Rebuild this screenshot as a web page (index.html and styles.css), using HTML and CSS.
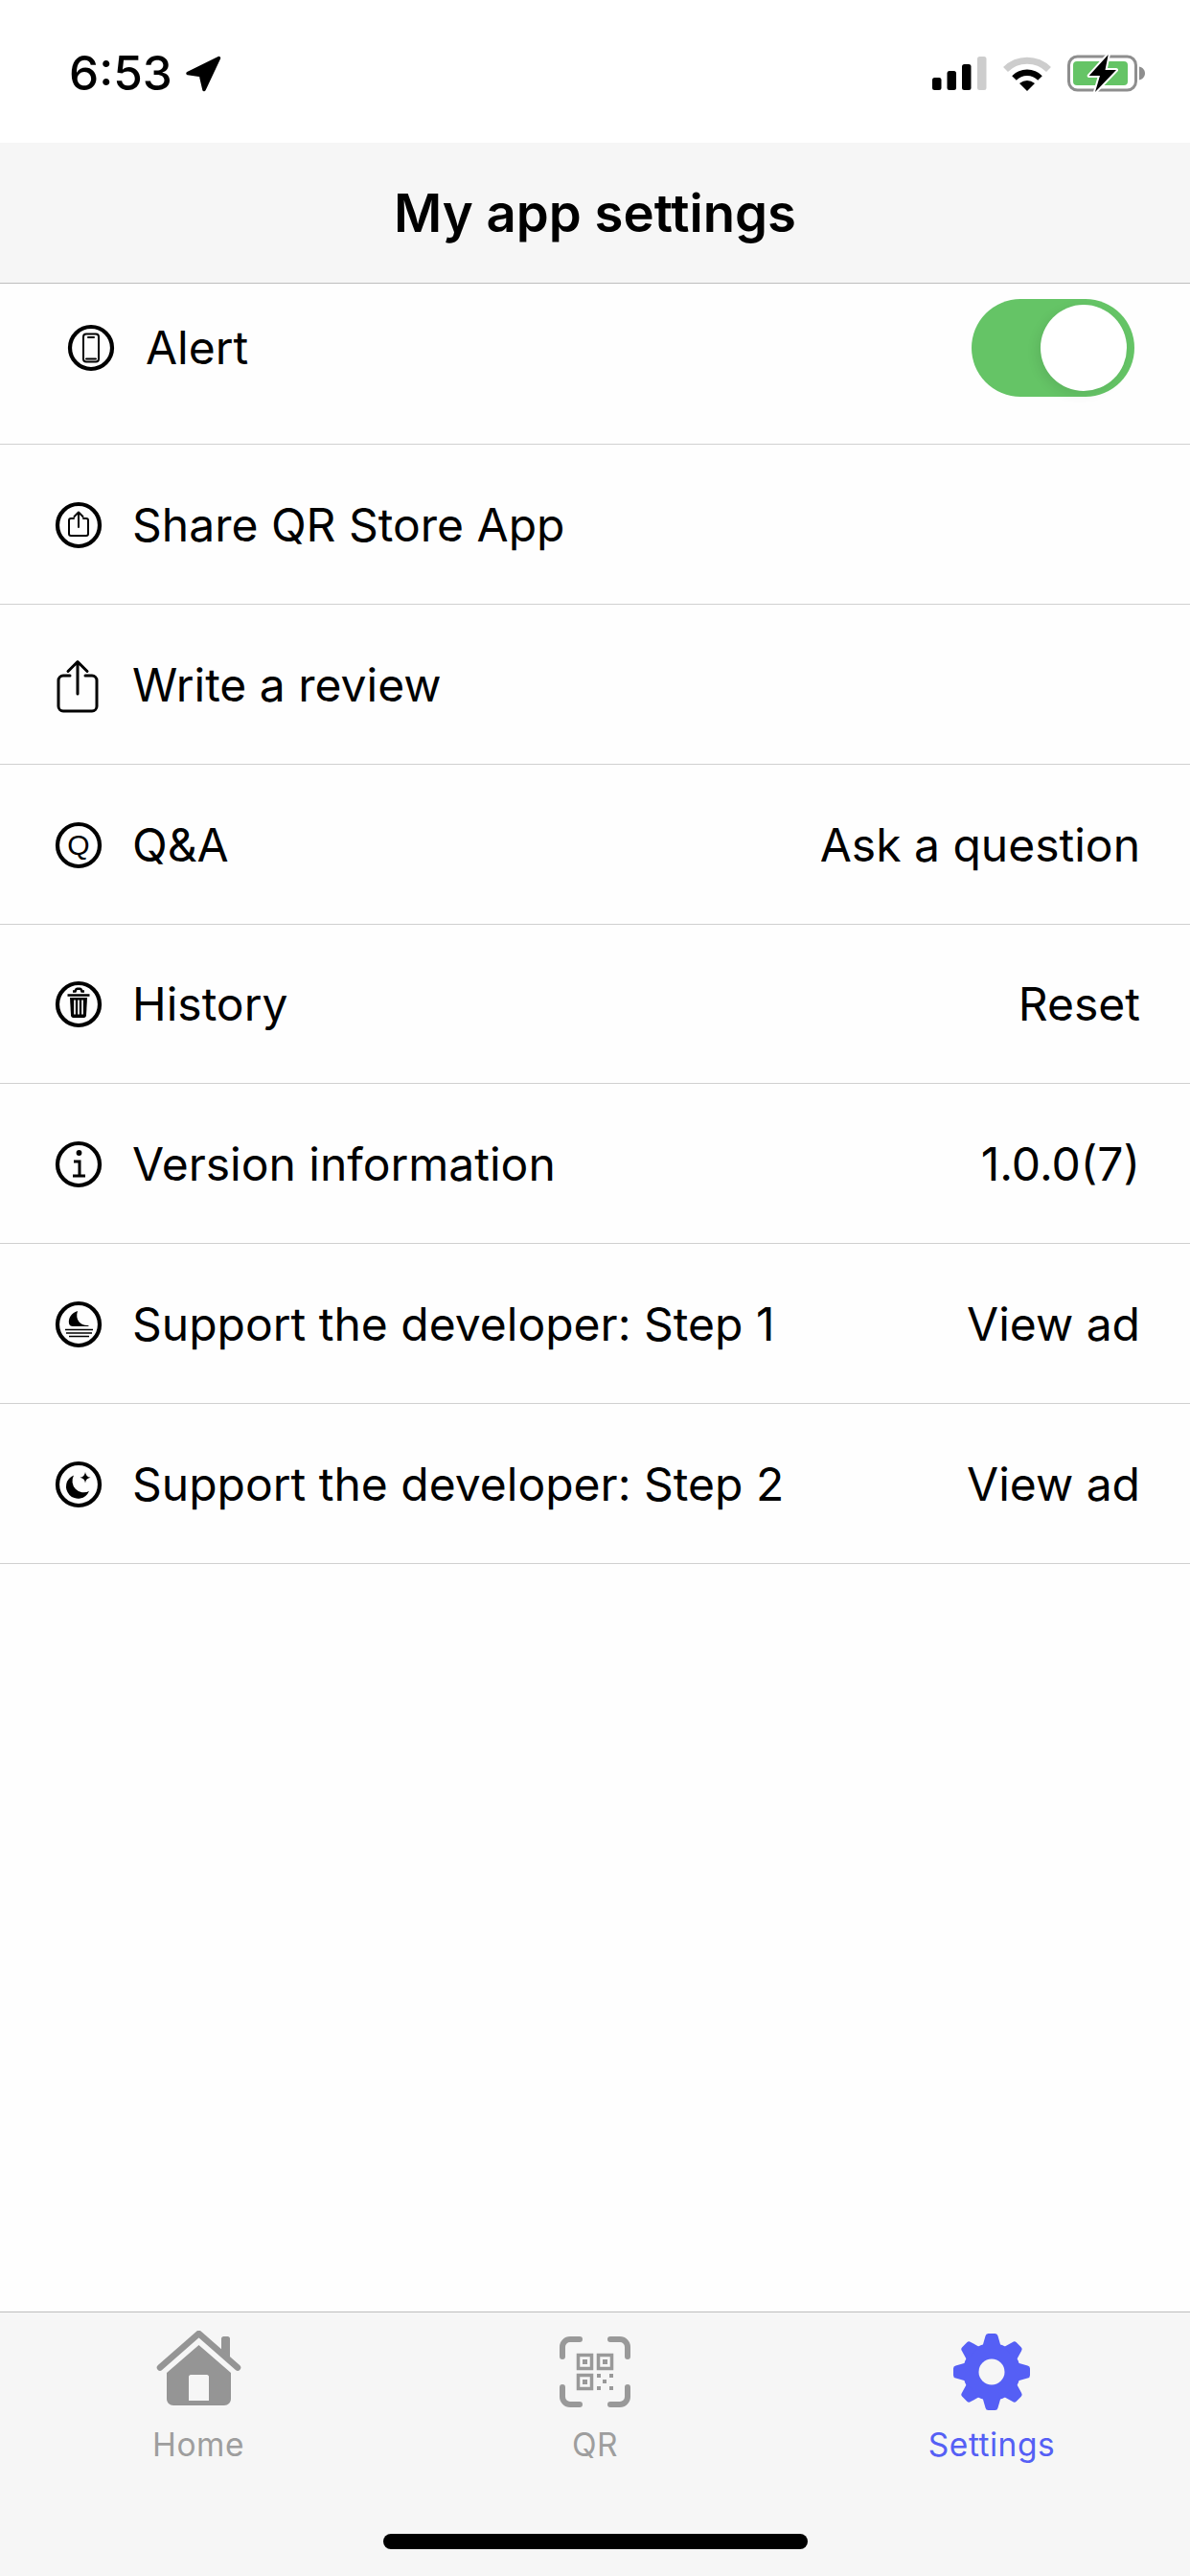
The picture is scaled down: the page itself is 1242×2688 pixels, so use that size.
FILE: index.html
```html
<!DOCTYPE html>
<html lang="en">
<head>
<meta charset="utf-8">
<title>My app settings</title>
<link rel="stylesheet" href="styles.css">
</head>
<body>
<div class="screen">
  <header class="status">
    <div class="status-left">
      <span class="time">6:53</span>
      <svg class="arrow" viewBox="0 0 38 39"><path d="M35.500 3.500 3 19.500l13.500 2L20 36.500Z" fill="#000" stroke="#000" stroke-width="3.500" stroke-linejoin="round"/></svg>
    </div>
    <div class="status-right">
      <svg class="signal" viewBox="0 0 57 35">
        <rect x="0" y="22" width="9.500" height="13" rx="2.500"/>
        <rect x="15.500" y="15" width="9.500" height="20" rx="2.500"/>
        <rect x="31" y="8" width="9.500" height="27" rx="2.500"/>
        <rect x="47" y="0" width="9.500" height="35" rx="2.500" fill="#cdcdcd"/>
      </svg>
      <svg class="wifi" viewBox="0 0 50 37">
        <path d="M2.500 14.500A32 32 0 0 1 47.500 14.500" fill="none" stroke="#cdcdcd" stroke-width="7"/>
        <path d="M11.500 23.500A19 19 0 0 1 38.500 23.500" fill="none" stroke="#000" stroke-width="6.500"/>
        <path d="M17 29Q25 23 33 29L25 37Z"/>
      </svg>
      <svg class="battery" viewBox="0 0 81 39">
        <rect x="1.500" y="2" width="70" height="35" rx="9" fill="none" stroke="#8e8e8e" stroke-width="3"/>
        <path d="M75 12.500c4 1 6 4 6 7s-2 6-6 7Z" fill="#8e8e8e"/>
        <rect x="6" y="7" width="57" height="25" rx="4" fill="#65c466"/>
        <path d="M42.700 0 22.700 22H34L29 39 51 16H39.500Z" fill="#000" stroke="#fff" stroke-width="4" paint-order="stroke" stroke-linejoin="round"/>
      </svg>
    </div>
  </header>

  <div class="navbar"><h1 class="nav-title">My app settings</h1></div>

  <main class="list">
    <div class="row row-alert">
      <div class="row-main">
        <svg class="icon" viewBox="0 0 48 48">
          <circle class="ring" cx="24" cy="24" r="22"/>
          <rect class="thin" x="16" y="9.500" width="16" height="29" rx="3"/>
          <path class="thin" d="M21 13h6M19 35.500h10"/>
        </svg>
        <span class="label">Alert</span>
      </div>
      <div class="toggle"><span class="thumb"></span></div>
    </div>

    <div class="row">
      <div class="row-main">
        <svg class="icon" viewBox="0 0 48 48">
          <circle class="ring" cx="24" cy="24" r="22"/>
          <path class="thin" d="M19 17h-3a2 2 0 0 0-2 2v14a2 2 0 0 0 2 2h16a2 2 0 0 0 2-2V19a2 2 0 0 0-2-2h-3M24 26V11M19.500 15l4.500-4.500 4.500 4.500"/>
        </svg>
        <span class="label">Share QR Store App</span>
      </div>
    </div>

    <div class="row">
      <div class="row-main">
        <svg class="icon icon-tall" viewBox="0 0 48 56">
          <path class="share" d="M15 18H8a5 5 0 0 0-5 5v27a5 5 0 0 0 5 5h30a5 5 0 0 0 5-5V23a5 5 0 0 0-5-5h-7M23 37V4M13 13.500 23 3.500l10 10"/>
        </svg>
        <span class="label">Write a review</span>
      </div>
    </div>

    <div class="row">
      <div class="row-main">
        <svg class="icon" viewBox="0 0 48 48">
          <circle class="ring" cx="24" cy="24" r="22"/>
          <text class="q-glyph" x="24" y="33.500" text-anchor="middle">Q</text>
        </svg>
        <span class="label">Q&amp;A</span>
      </div>
      <span class="value">Ask a question</span>
    </div>

    <div class="row">
      <div class="row-main">
        <svg class="icon" viewBox="0 0 48 48">
          <circle class="ring" cx="24" cy="24" r="22"/>
          <path d="M18 10.500h2.500l.8-2c.2-.5.6-.8 1.200-.8h3c.6 0 1 .3 1.200.8l.8 2h2.500M12.500 14.500h23" fill="none" stroke="#000" stroke-width="2.500"/>
          <path d="M15 17h18l-1 18.500c-.1 1.500-1 2.500-2.500 2.500h-11c-1.500 0-2.400-1-2.500-2.500Z"/>
          <path d="M20 19.500v15M24 19.500v15M28 19.500v15" stroke="#fff" stroke-width="1.700" fill="none"/>
        </svg>
        <span class="label">History</span>
      </div>
      <span class="value">Reset</span>
    </div>

    <div class="row">
      <div class="row-main">
        <svg class="icon" viewBox="0 0 48 48">
          <circle class="ring" cx="24" cy="24" r="22"/>
          <circle cx="24.500" cy="12" r="2.900"/>
          <path d="M19 21h6v15M18 36h13" fill="none" stroke="#000" stroke-width="3"/>
        </svg>
        <span class="label">Version information</span>
      </div>
      <span class="value">1.0.0(7)</span>
    </div>

    <div class="row">
      <div class="row-main">
        <svg class="icon" viewBox="0 0 48 48">
          <circle class="ring" cx="24" cy="24" r="22"/>
          <path d="M23 10C16 12 13 18 14 23c.3 2 2 3 4 3h17c-1-1-1-1-2-1-7 0-13-6-10-15Z"/>
          <path d="M10 29.500h29M11 33h27M14 36.500h21" stroke="#000" stroke-width="1.600" fill="none"/>
        </svg>
        <span class="label">Support the developer: Step 1</span>
      </div>
      <span class="value">View ad</span>
    </div>

    <div class="row">
      <div class="row-main">
        <svg class="icon" viewBox="0 0 48 48">
          <circle class="ring" cx="24" cy="24" r="22"/>
          <path d="M19 14.500A12.500 12.500 0 1 0 35 31 12 12 0 0 1 19 14.500Z"/>
          <path d="M31 11q.6 5 5.500 5.800-4.900.8-5.500 5.700-.6-4.900-5.500-5.700 4.900-.8 5.500-5.800Z"/>
        </svg>
        <span class="label">Support the developer: Step 2</span>
      </div>
      <span class="value">View ad</span>
    </div>
  </main>

  <nav class="tabbar">
    <div class="tabs">
      <div class="tab">
        <svg class="tab-icon home" viewBox="0 0 89 78">
          <path d="M68 8.500c0-1.500 1-2.500 2.500-2.500h4c1.500 0 2.500 1 2.500 2.500V28l-9-8Z"/>
          <path d="M4 38.500 44.500 3 85 38.500" fill="none" stroke="#959595" stroke-width="6.500" stroke-linecap="round" stroke-linejoin="round"/>
          <path fill-rule="evenodd" d="M44.500 15 78 44v27c0 4-3 7-7 7H18c-4 0-7-3-7-7V44ZM36 46c-1 0-2 1-2 2v25h21V48c0-1-1-2-2-2Z"/>
        </svg>
        <span class="tab-label">Home</span>
      </div>
      <div class="tab">
        <svg class="tab-icon qr" viewBox="0 0 74 74">
          <path class="bracket" d="M3 21V11a8 8 0 0 1 8-8h10M53 3h10a8 8 0 0 1 8 8v10M71 53v10a8 8 0 0 1-8 8H53M21 71H11a8 8 0 0 1-8-8V53"/>
          <rect class="qr-sq" x="19.500" y="19.500" width="14" height="14"/>
          <rect class="qr-sq" x="40.500" y="19.500" width="14" height="14"/>
          <rect class="qr-sq" x="19.500" y="40.500" width="14" height="14"/>
          <path d="M24 24h5v5h-5zM45 24h5v5h-5zM24 45h5v5h-5zM39 39h4v4h-4zM52 39h4v4h-4zM45 45h4v4h-4zM39 52h4v4h-4zM52 52h4v4h-4z"/>
        </svg>
        <span class="tab-label">QR</span>
      </div>
      <div class="tab tab-active">
        <svg class="tab-icon gear" viewBox="-40 -40 80 80">
          <defs><path id="tooth" d="M-9.500-27-6.500-37.500Q-6-40-3.500-40H3.500Q6-40 6.500-37.500L9.500-27Z"/></defs>
          <circle r="30"/>
          <use href="#tooth"/>
          <use href="#tooth" transform="rotate(45)"/>
          <use href="#tooth" transform="rotate(90)"/>
          <use href="#tooth" transform="rotate(135)"/>
          <use href="#tooth" transform="rotate(180)"/>
          <use href="#tooth" transform="rotate(225)"/>
          <use href="#tooth" transform="rotate(270)"/>
          <use href="#tooth" transform="rotate(315)"/>
          <circle class="gear-hole" r="13.500"/>
        </svg>
        <span class="tab-label">Settings</span>
      </div>
    </div>
    <div class="home-indicator"></div>
  </nav>
</div>
</body>
</html>
```

FILE: styles.css
```css
* { box-sizing: border-box; }
html, body { margin: 0; padding: 0; background: #fff; }
body { font-family: Inter, "Liberation Sans", sans-serif; color: #000; }

.screen { width: 1242px; height: 2688px; display: flex; flex-direction: column; overflow: hidden; background: #fefefe; }

/* status bar */
.status { height: 149px; flex: none; display: flex; justify-content: space-between; align-items: flex-start; padding: 57px 47px 0 72px; background: #fff; }
.status-left { display: flex; align-items: center; gap: 13px; height: 39px; }
.time { font-size: 49.500px; font-weight: 500; line-height: 39px; }
.arrow { width: 38px; height: 39px; }
.status-right { display: flex; align-items: center; height: 39px; }
.signal { width: 57px; height: 35px; margin-right: 17px; }
.wifi { width: 50px; height: 37px; margin-right: 17px; }
.battery { width: 81px; height: 39px; }

/* nav bar */
.navbar { height: 147px; flex: none; display: flex; align-items: center; justify-content: center; background: #f6f6f6; border-bottom: 1px solid #bdbdbd; }
.nav-title { margin: 0; font-size: 54.500px; font-weight: 600; line-height: 1; }

/* list */
.list { flex: 1; }
.row { height: 166.85px; display: flex; align-items: center; justify-content: space-between; padding: 2px 52px 0 58px; border-bottom: 1.500px solid #d0d0d0; }
.row-alert { height: 168px; padding: 0 58px 34px 71px; }
.row-main { display: flex; align-items: center; gap: 32px; }
.row-alert .row-main { gap: 33px; }
.label, .value { font-size: 48px; line-height: 60px; font-weight: 400; }

.icon { width: 48px; height: 48px; flex: none; overflow: visible; }
.icon-tall { height: 56px; }
.ring { fill: none; stroke: #000; stroke-width: 4.200; }
.thin { fill: none; stroke: #000; stroke-width: 2; stroke-linecap: round; stroke-linejoin: round; }
.share { fill: none; stroke: #000; stroke-width: 3; stroke-linecap: round; stroke-linejoin: round; }
.q-glyph { font-family: "Liberation Sans", sans-serif; font-size: 30px; font-weight: 400; }

.toggle { width: 170px; height: 102px; border-radius: 51px; background: #65c466; display: flex; align-items: center; justify-content: flex-end; padding-right: 8px; }
.thumb { width: 90px; height: 90px; border-radius: 50%; background: #fff; box-shadow: -4px 4px 12px rgba(0, 0, 0, 0.08); }

/* tab bar */
.tabbar { height: 276px; flex: none; background: #f6f6f6; border-top: 1.500px solid #bdbdbd; display: flex; flex-direction: column; align-items: center; }
.tabs { width: 100%; height: 231px; display: grid; grid-template-columns: repeat(3, 1fr); }
.tab { height: 159px; display: flex; flex-direction: column; align-items: center; justify-content: flex-end; }
.tab-icon { fill: #959595; flex: none; }
.home { width: 89px; height: 78px; margin-bottom: 21px; }
.qr { width: 74px; height: 74px; margin-bottom: 19px; fill: #999; }
.gear { width: 80px; height: 80px; margin-bottom: 16px; fill: #555ff5; }
.gear-hole { fill: #f6f6f6; }
.bracket { fill: none; stroke: #999; stroke-width: 6; stroke-linecap: round; }
.qr-sq { fill: none; stroke: #999; stroke-width: 3.500; }
.tab-label { font-size: 33.500px; line-height: 41px; color: #9e9e9e; letter-spacing: 0.5px; }
.tab-active .tab-label { color: #555ff5; }
.home-indicator { width: 443px; height: 16px; border-radius: 8px; background: #000; }
```
